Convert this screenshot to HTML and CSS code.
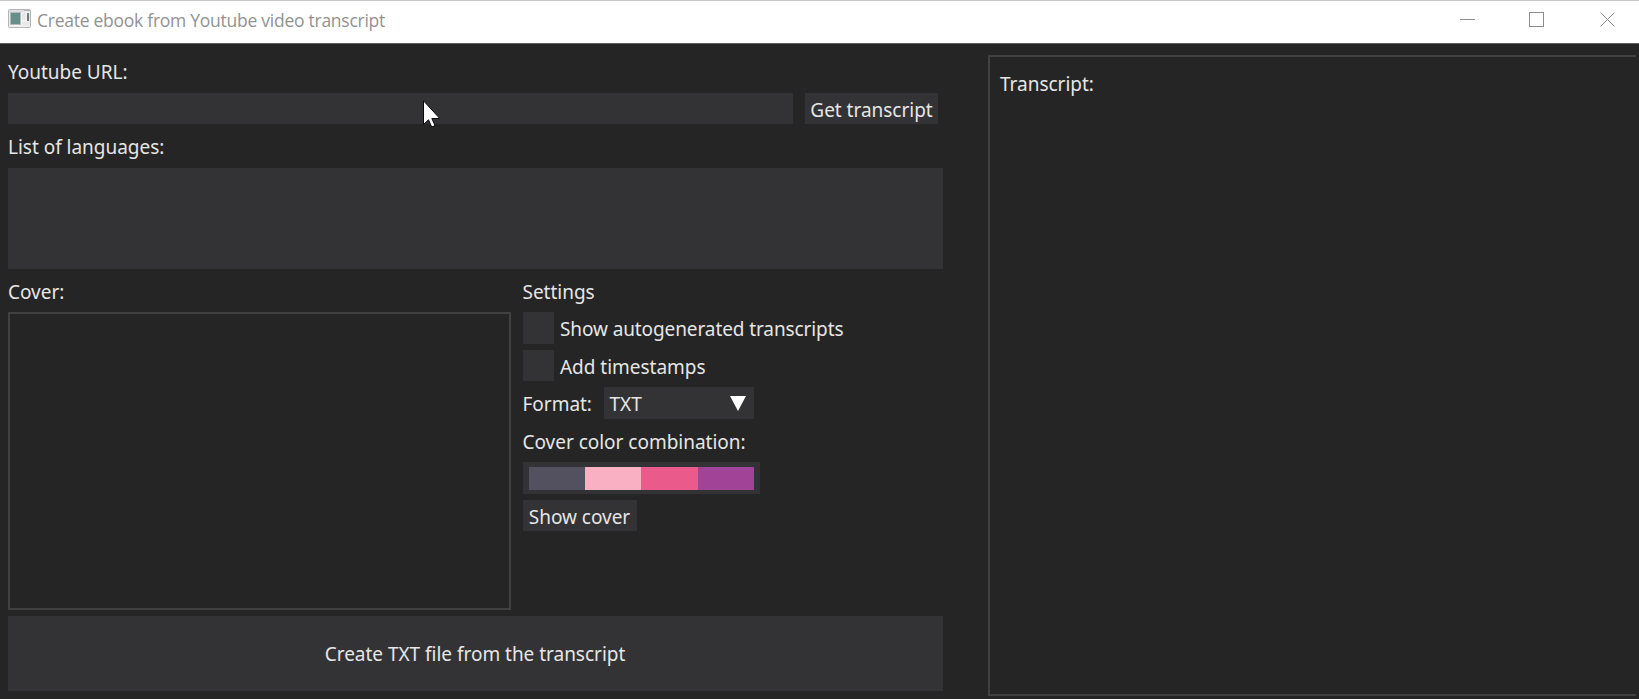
FILE: index.html
```html
<!DOCTYPE html>
<html lang="en">
<head>
<meta charset="utf-8">
<title>Create ebook from Youtube video transcript</title>
<link rel="stylesheet" href="styles.css">
</head>
<body>
<header class="titlebar">
  <svg class="app-icon" width="23" height="19" viewBox="0 0 23 19">
    <rect x=".5" y=".5" width="22" height="18" rx="1" fill="#e9e9e9" stroke="#b5b5b5"/>
    <path d="M1 2h15" stroke="#dedede" stroke-width="2"/>
    <path d="M16 1.500h6" stroke="#b5b5b5"/>
    <path d="M2 3.500h19v14h-19z" fill="#f5f5f5"/>
    <rect x="2.500" y="3.500" width="10" height="12" fill="#659087" stroke="#b5b9bd"/>
    <path d="M14 4h4v7h-4zM14 12.500h7v4h-7z" fill="#e8e8e8"/>
    <path d="M19 4h2v8h-2z" fill="#67797a"/><path d="M19 4h2v2h-2z" fill="#659087"/>
  </svg>
  <span class="title">Create ebook from Youtube video transcript</span>
  <svg class="controls" width="156" height="16" viewBox="0 0 156 16" fill="none" stroke="#8c8c8c" shape-rendering="crispEdges">
    <path d="M0 7.500h15M69.500 .5h14v14h-14z"/>
    <path d="M140.500 .5l14 14M154.500 .5l-14 14" shape-rendering="auto"/>
  </svg>
</header>
<main class="workspace">
  <section class="form">
    <label class="row"><span>Youtube URL:</span></label>
    <div class="url-row">
      <div class="field"></div>
      <button class="button get"><span>Get transcript</span></button>
    </div>
    <div class="row"><span>List of languages:</span></div>
    <div class="languages"></div>
    <div class="middle">
      <div class="cover">
        <div class="row"><span>Cover:</span></div>
        <div class="preview"></div>
      </div>
      <div class="settings">
        <div class="row"><span>Settings</span></div>
        <div class="row check"><i class="box"></i><span class="auto">Show autogenerated transcripts</span></div>
        <div class="row check"><i class="box"></i><span>Add timestamps</span></div>
        <div class="row format"><span class="format-label">Format:</span>
          <div class="select"><span>TXT</span>
            <svg class="arrow" width="16" height="15" viewBox="0 0 16 15"><path d="M0 0h16L8 15z" fill="#fff"/></svg>
          </div>
        </div>
        <div class="row"><span>Cover color combination:</span></div>
        <div class="palette"><i class="slate"></i><i class="blush"></i><i class="rose"></i><i class="violet"></i></div>
        <button class="button show"><span>Show cover</span></button>
      </div>
    </div>
    <button class="button create"><span>Create TXT file from the transcript</span></button>
  </section>
  <section class="transcript"><span>Transcript:</span></section>
</main>
<svg class="cursor" width="19" height="28" viewBox="0 0 19 28"><path d="M.5 .8v23.700l5-4.700 3.200 7.200 3.300-1.500-3.200-7h8z" fill="#fff" stroke="#080812"/></svg>
</body>
</html>
```
FILE: styles.css
```css
* { box-sizing: border-box; }
body {
  margin: 0;
  width: 1639px;
  height: 699px;
  overflow: hidden;
  display: flex;
  flex-direction: column;
  background: #252525;
  color: #e6e6e6;
  font: 19px/30px "Noto Sans", sans-serif;
  letter-spacing: -0.02px;
  white-space: nowrap;
}
.titlebar {
  height: 44px;
  flex: none;
  display: flex;
  align-items: flex-start;
  padding: 9px 23px 0 8px;
  background: #fff;
  border-top: 1px solid #c8c8c8;
  border-bottom: 1px solid #606060;
}
.app-icon { margin-top: -1px; }
.title {
  margin: -1px 0 0 6px;
  color: #929292;
  font: 17.5px/22px "Open Sans", sans-serif;
  letter-spacing: -0.26px;
}
.controls { margin: 2px 0 0 auto; }
.workspace {
  flex: 1;
  display: flex;
  justify-content: space-between;
  padding: 11px 3px 3px 8px;
}
.form {
  width: 935px;
  display: flex;
  flex-direction: column;
  gap: 6px;
}
.row {
  height: 31.5px;
  display: flex;
  align-items: center;
}
.row span, .button span { padding-top: 3px; }
.url-row { display: flex; gap: 12px; height: 31.5px; }
.field { width: 785px; background: #333335; }
.button {
  display: flex;
  align-items: center;
  justify-content: center;
  padding: 0;
  border: 0;
  background: #333335;
  color: inherit;
  font: inherit;
  letter-spacing: inherit;
}
.get { width: 133px; }
.languages { height: 101px; background: #333335; }
.middle { display: flex; gap: 12px; height: 335px; }
.cover { width: 502.5px; display: flex; flex-direction: column; gap: 6px; }
.preview { flex: 1; border: 2px solid #414141; }
.settings { display: flex; flex-direction: column; gap: 6px; align-items: flex-start; }
.check { gap: 6px; }
.auto { letter-spacing: -0.1px; }
.box { width: 31.5px; height: 31.5px; background: #333335; }
.format { gap: 12px; }
.format-label { width: 69px; }
.select {
  width: 150px;
  height: 31.5px;
  display: flex;
  align-items: center;
  justify-content: space-between;
  padding: 0 8px 0 6px;
  background: #333335;
}
.arrow { margin-top: 1px; }
.palette {
  width: 237px;
  height: 31.5px;
  display: flex;
  padding: 4.5px 5.5px 4px 6px;
  background: #333335;
}
.palette i { flex: 1; }
.slate { background: #53505f; }
.blush { background: #f9b0c3; }
.rose { background: #ea5a8b; }
.violet { background: #a14397; }
.show { width: 114px; height: 31.5px; }
.create { height: 75px; padding: 0 1px 1px 0; }
.transcript {
  width: 648px;
  border: 2px solid #414141;
  border-right: 0;
  padding: 12px 10px;
}
.cursor { position: absolute; left: 423px; top: 100px; }
```
